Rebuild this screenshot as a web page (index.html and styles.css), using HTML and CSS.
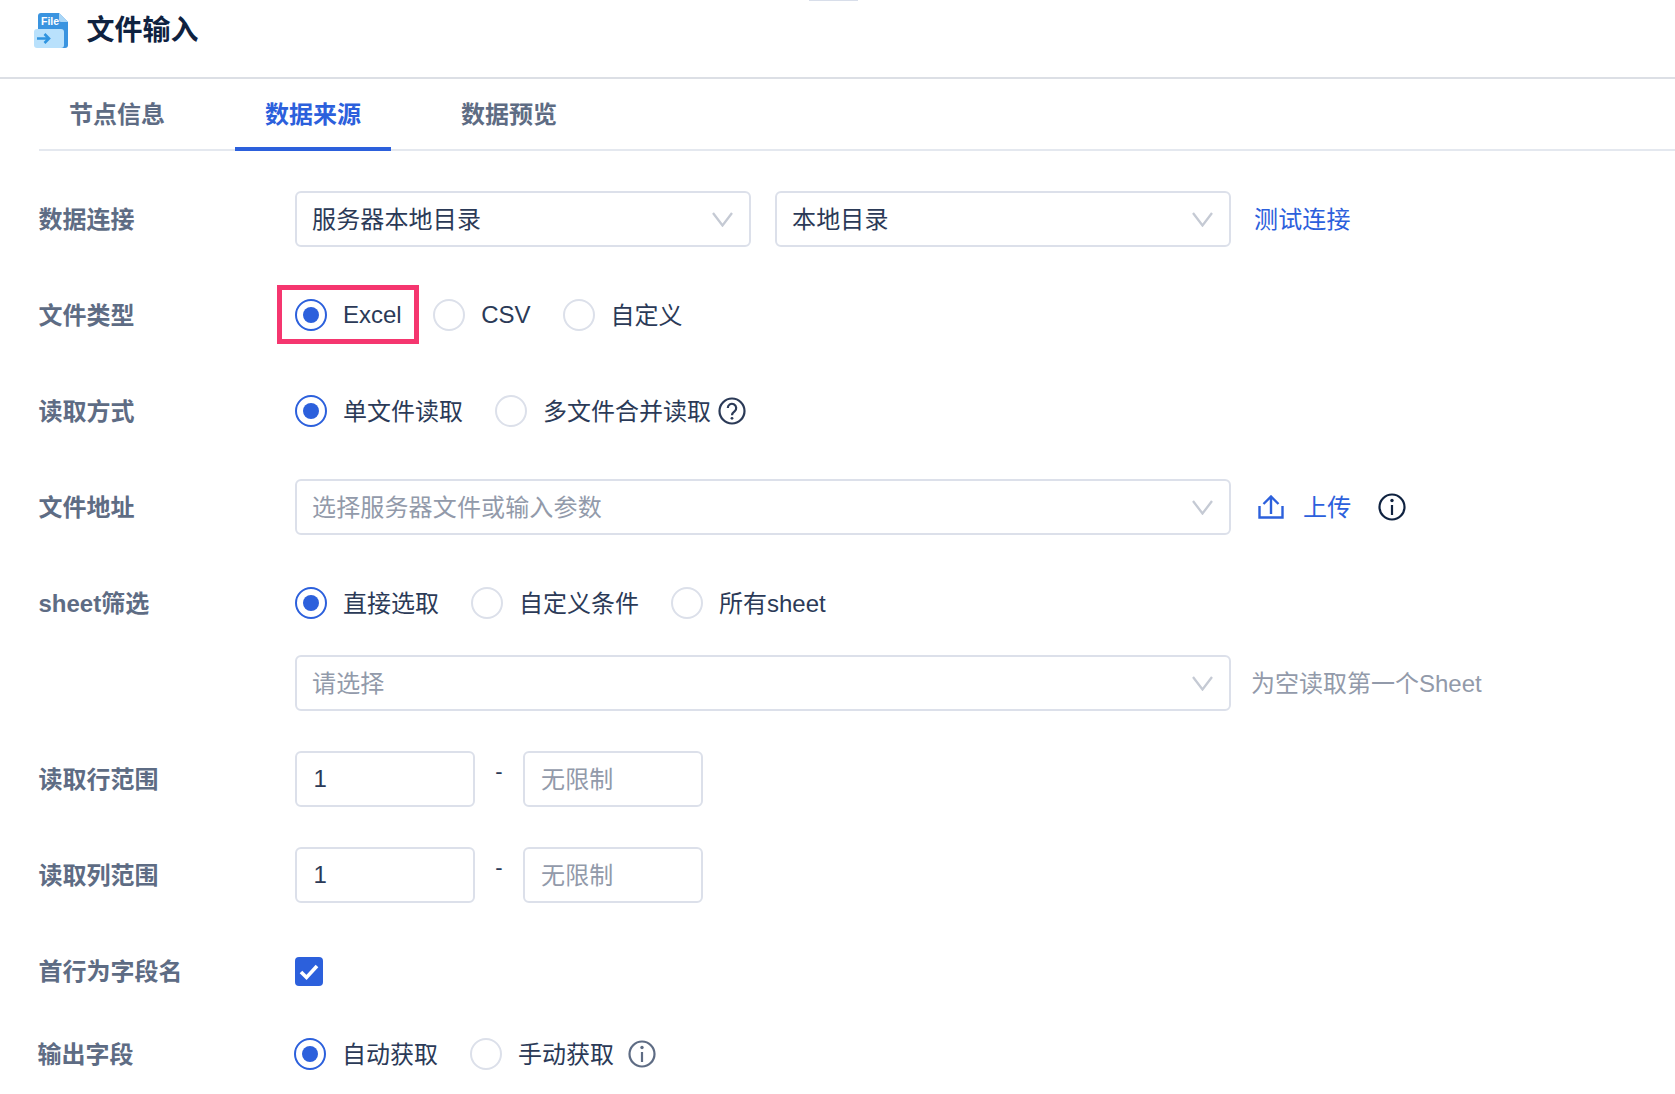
FILE: index.html
```html
<!DOCTYPE html>
<html lang="zh-CN">
<head>
<meta charset="utf-8">
<title>文件输入</title>
<link rel="stylesheet" href="styles.css">
</head>
<body>
<div class="top-stub"></div>
<header class="header">
  <svg class="logo" width="34" height="35" viewBox="0 0 34 35">
    <path d="M4 3a3 3 0 0 1 3-3h18l9 9v23a3 3 0 0 1-3 3H7a3 3 0 0 1-3-3z" fill="#3a94e0"/>
    <path d="M25 0l9 9h-7a2 2 0 0 1-2-2z" fill="#a9d6f7"/>
    <text x="7" y="11.500" class="logo-text">File</text>
    <rect x="0" y="16" width="30" height="19" rx="3" fill="#b9e1fc"/>
    <path d="M3 25.500h12M10.500 21l4.500 4.500-4.500 4.500" fill="none" stroke="#2f94e0" stroke-width="2.600"/>
  </svg>
  <h1 class="title">文件输入</h1>
</header>
<nav class="tabs">
  <a class="tab">节点信息</a>
  <a class="tab tab-active">数据来源</a>
  <a class="tab">数据预览</a>
</nav>
<main class="form">
  <div class="row">
    <div class="label">数据连接</div>
    <div class="controls">
      <div class="select select-half"><span class="cjk">服务器本地目录</span><svg class="chevron" width="21" height="15" viewBox="0 0 21 15"><path d="M1 1l9.500 12.500L20 1"/></svg></div>
      <div class="select select-half select-gap"><span class="cjk">本地目录</span><svg class="chevron" width="21" height="15" viewBox="0 0 21 15"><path d="M1 1l9.500 12.500L20 1"/></svg></div>
      <a class="link link-test cjk">测试连接</a>
    </div>
  </div>
  <div class="row">
    <div class="label">文件类型</div>
    <div class="controls">
      <label class="option option-marked"><i class="radio radio-on"></i><span>Excel</span><b class="highlight"></b></label>
      <label class="option"><i class="radio"></i><span>CSV</span></label>
      <label class="option"><i class="radio"></i><span class="cjk">自定义</span></label>
    </div>
  </div>
  <div class="row">
    <div class="label">读取方式</div>
    <div class="controls">
      <label class="option"><i class="radio radio-on"></i><span class="cjk">单文件读取</span></label>
      <label class="option option-tight"><i class="radio"></i><span class="cjk">多文件合并读取</span></label>
      <svg class="help" width="28" height="28" viewBox="0 0 28 28"><circle cx="14" cy="14" r="12.500"/><path d="M9.800 11a4.200 4.200 0 1 1 6.800 3.300c-1.600 1.200-2.600 1.900-2.600 3.900"/><circle class="dot" cx="14" cy="21.300" r="1.400"/></svg>
    </div>
  </div>
  <div class="row">
    <div class="label">文件地址</div>
    <div class="controls">
      <div class="select select-full placeholder"><span class="cjk">选择服务器文件或输入参数</span><svg class="chevron" width="21" height="15" viewBox="0 0 21 15"><path d="M1 1l9.500 12.500L20 1"/></svg></div>
      <svg class="upload" width="26" height="24" viewBox="0 0 26 24"><path d="M1.500 11v11.500h23V11M13 19V2M5.500 9L13 1.500 20.500 9"/></svg>
      <a class="link link-upload cjk">上传</a>
      <svg class="info info-dark" width="28" height="28" viewBox="0 0 28 28"><circle cx="14" cy="14" r="12.500"/><path d="M14 12v10"/><circle class="dot" cx="14" cy="7.500" r="1.700"/></svg>
    </div>
  </div>
  <div class="row">
    <div class="label">sheet筛选</div>
    <div class="controls">
      <label class="option"><i class="radio radio-on"></i><span class="cjk">直接选取</span></label>
      <label class="option"><i class="radio"></i><span class="cjk">自定义条件</span></label>
      <label class="option"><i class="radio"></i><span class="cjk">所有sheet</span></label>
    </div>
  </div>
  <div class="row row-sub">
    <div class="label"></div>
    <div class="controls">
      <div class="select select-full placeholder"><span class="cjk">请选择</span><svg class="chevron" width="21" height="15" viewBox="0 0 21 15"><path d="M1 1l9.500 12.500L20 1"/></svg></div>
      <span class="hint cjk">为空读取第一个Sheet</span>
    </div>
  </div>
  <div class="row">
    <div class="label">读取行范围</div>
    <div class="controls">
      <div class="input input-value">1</div><span class="dash">-</span><div class="input placeholder"><span class="cjk">无限制</span></div>
    </div>
  </div>
  <div class="row">
    <div class="label">读取列范围</div>
    <div class="controls">
      <div class="input input-value">1</div><span class="dash">-</span><div class="input placeholder"><span class="cjk">无限制</span></div>
    </div>
  </div>
  <div class="row">
    <div class="label">首行为字段名</div>
    <div class="controls">
      <span class="checkbox"><svg width="28" height="29" viewBox="0 0 28 29"><path d="M6 15l5.500 5.500L22 9"/></svg></span>
    </div>
  </div>
  <div class="row row-last">
    <div class="label">输出字段</div>
    <div class="controls">
      <label class="option"><i class="radio radio-on"></i><span class="cjk">自动获取</span></label>
      <label class="option option-tight"><i class="radio"></i><span class="cjk">手动获取</span></label>
      <svg class="info info-muted" width="28" height="28" viewBox="0 0 28 28"><circle cx="14" cy="14" r="12.500"/><path d="M14 12v10"/><circle class="dot" cx="14" cy="7.500" r="1.700"/></svg>
    </div>
  </div>
</main>
</body>
</html>
```
FILE: styles.css
```css
* { box-sizing: border-box; }
html, body { margin: 0; padding: 0; height: 100%; overflow: hidden; background: #fff; }
body {
  position: relative;
  font-family: "Liberation Sans", "Noto Sans CJK SC", sans-serif;
  font-size: 24px;
  color: #2b3a57;
}
.top-stub { position: absolute; top: 0; left: 809px; width: 49px; height: 1px; background: #d8deea; }
.header {
  height: 79px;
  padding: 13px 0 0 34px;
  display: flex;
  align-items: flex-start;
  gap: 18.500px;
  border-bottom: 2px solid #dcdfe5;
}
.logo { flex: none; }
.logo-text { font: bold 10.500px "Liberation Sans", sans-serif; fill: #fff; }
.title { margin: 0; font-size: 28px; line-height: 36px; font-weight: 700; color: #0f2240; }
.tabs {
  margin-left: 39px;
  height: 72px;
  display: flex;
  gap: 40px;
  border-bottom: 2px solid #e4e8ef;
}
.tab {
  width: 156px;
  height: 72px;
  padding-top: 18px;
  line-height: 36px;
  text-align: center;
  font-weight: 700;
  color: #5e6c84;
}
.tab-active { color: #2c60dc; border-bottom: 4px solid #2c60dc; }
.form { padding: 40px 0 0 38.500px; }
.row { display: flex; align-items: center; height: 56px; margin-bottom: 40px; }
.row:nth-child(5) { margin-bottom: 24px; }
.row-last { margin-top: -13px; margin-left: -1px; }
.label { width: 256.500px; flex: none; font-weight: 700; color: #5e6c84; padding-bottom: 4px; }
.cjk { padding-bottom: 4px; letter-spacing: 0.150px; }
.option .cjk, .hint.cjk { letter-spacing: 0; }
.controls { display: flex; align-items: center; }
.select {
  height: 56px;
  border: 2px solid #dce0ea;
  border-radius: 6px;
  padding: 0 16px 0 15px;
  display: flex;
  align-items: center;
  justify-content: space-between;
}
.select-half { width: 456px; }
.select-gap { margin-left: 24px; }
.select-full { width: 936px; }
.placeholder { color: #929aaa; }
.chevron { flex: none; }
.chevron path { fill: none; stroke: #c5cad4; stroke-width: 2.300; }
.link { color: #2c60dc; }
.link-test { margin-left: 23px; }
.link-upload { margin-left: 19px; }
.upload { margin-left: 27px; flex: none; }
.upload path { fill: none; stroke: #2c60dc; stroke-width: 2.400; }
.info, .help { flex: none; }
.info circle, .help circle, .info path, .help path { fill: none; stroke-width: 2.200; }
.info-dark { margin-left: 26.500px; }
.info-dark circle, .info-dark path { stroke: #0f2240; }
.info-muted { margin-left: 14px; }
.info-muted circle, .info-muted path { stroke: #5e6c84; }
.help { margin-left: 7px; }
.help circle, .help path { stroke: #2b3a57; }
.info .dot { fill: #0f2240; stroke: none; }
.info-muted .dot { fill: #5e6c84; }
.help .dot { fill: #2b3a57; stroke: none; }
.option { position: relative; display: flex; align-items: center; gap: 16px; margin-right: 32px; }
.option-marked { margin-right: 31.500px; }
.option-tight { margin-right: 0; }
.radio {
  width: 32px;
  height: 32px;
  flex: none;
  border: 2px solid #dce0ea;
  border-radius: 50%;
  display: flex;
  align-items: center;
  justify-content: center;
}
.radio-on { border-color: #2c60dc; }
.radio-on::after { content: ""; width: 16px; height: 16px; border-radius: 50%; background: #2c60dc; }
.highlight {
  position: absolute;
  top: -14px;
  left: -18px;
  width: 142px;
  height: 59px;
  border: 5px solid #f5366f;
}
.hint { margin-left: 20px; color: #929aaa; }
.input {
  width: 180px;
  height: 56px;
  border: 2px solid #dce0ea;
  border-radius: 6px;
  padding: 0 16px;
  display: flex;
  align-items: center;
}
.input-value { padding-left: 16.500px; }
.dash { width: 48px; text-align: center; margin-top: -14px; font-size: 22px; }
.checkbox {
  width: 28px;
  height: 29px;
  background: #2c60dc;
  border-radius: 4px;
  display: block;
}
.checkbox svg { display: block; }
.checkbox path { fill: none; stroke: #fff; stroke-width: 3.600; }
```
